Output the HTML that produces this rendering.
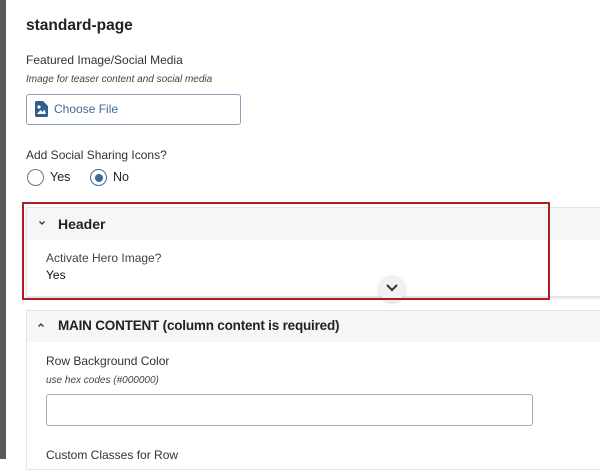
<!DOCTYPE html>
<html><head><style>
*{margin:0;padding:0;box-sizing:border-box}
body{width:600px;height:459px;overflow:hidden;background:#fff;font-family:"Liberation Sans",sans-serif;color:#222;position:relative}
.a{position:absolute;white-space:nowrap}
</style></head><body>
<div class="a" style="left:0;top:0;width:6px;height:459px;background:#5a5a5a"></div>
<div class="a" style="left:26px;top:17px;font-size:15.5px;font-weight:bold;color:#222">standard-page</div>
<div class="a" style="left:26px;top:53px;font-size:12px;color:#333">Featured Image/Social Media</div>
<div class="a" style="left:26px;top:74px;font-size:10px;font-style:italic;color:#444">Image for teaser content and social media</div>
<div class="a" style="left:26px;top:94px;width:215px;height:31px;border:1px solid #8aa0b8;border-radius:3px"></div>
<svg class="a" style="left:35px;top:101px" width="13" height="16" viewBox="0 0 13 16"><path d="M0 1.5Q0 0 1.5 0H8L13 5V14.5Q13 16 11.5 16H1.5Q0 16 0 14.5Z" fill="#2f5f8a"/><circle cx="4" cy="6" r="1.6" fill="#fff"/><path d="M2 13L5.5 9L7.5 11L9.5 8.5L11 13Z" fill="#fff"/></svg>
<div class="a" style="left:54px;top:102px;font-size:12px;color:#3d6b94">Choose File</div>
<div class="a" style="left:26px;top:148px;font-size:12px;color:#333">Add Social Sharing Icons?</div>
<div class="a" style="left:27px;top:169px;width:17px;height:17px;border:1.5px solid #777;border-radius:50%"></div>
<div class="a" style="left:50px;top:170px;font-size:12.5px;color:#222">Yes</div>
<div class="a" style="left:90px;top:169px;width:17px;height:17px;border:1.5px solid #3d6b94;border-radius:50%"></div>
<div class="a" style="left:94.5px;top:173.5px;width:8px;height:8px;background:#3d6b94;border-radius:50%"></div>
<div class="a" style="left:113px;top:170px;font-size:12.5px;color:#222">No</div>
<div class="a" style="left:26px;top:207px;width:580px;height:90px;border:1px solid #e2e4e8;background:#fff;box-shadow:0 1px 2px rgba(0,0,0,.15)"></div>
<div class="a" style="left:27px;top:208px;width:580px;height:32px;background:#f5f6f8"></div>
<svg class="a" style="left:38px;top:220px" width="8" height="6" viewBox="0 0 8 6"><path d="M1.5 1.5L4 4L6.5 1.5" stroke="#333" stroke-width="1.3" fill="none"/></svg>
<div class="a" style="left:58px;top:216px;font-size:14px;font-weight:bold;color:#222">Header</div>
<div class="a" style="left:46px;top:251px;font-size:12px;color:#444">Activate Hero Image?</div>
<div class="a" style="left:46px;top:268px;font-size:12px;color:#111">Yes</div>
<div class="a" style="left:379px;top:276px;width:26px;height:26px;border-radius:50%;background:#f0f1f3;box-shadow:0 1px 3px rgba(0,0,0,.2)"></div>
<svg class="a" style="left:385px;top:283px" width="14" height="10" viewBox="0 0 14 10"><path d="M2 2L7 7L12 2" stroke="#333" stroke-width="2" fill="none"/></svg>
<div class="a" style="left:22px;top:202px;width:528px;height:98px;border:2px solid #b01c24"></div>
<div class="a" style="left:26px;top:310px;width:580px;height:160px;border:1px solid #e2e4e8;background:#fff"></div>
<div class="a" style="left:27px;top:311px;width:580px;height:31px;background:#f5f6f8"></div>
<svg class="a" style="left:37px;top:322px" width="8" height="6" viewBox="0 0 8 6"><path d="M1.5 4.5L4 2L6.5 4.5" stroke="#333" stroke-width="1.3" fill="none"/></svg>
<div class="a" style="left:58px;top:318px;font-size:13.5px;font-weight:bold;color:#222;letter-spacing:-0.2px">MAIN CONTENT (column content is required)</div>
<div class="a" style="left:46px;top:354px;font-size:12px;color:#333">Row Background Color</div>
<div class="a" style="left:46px;top:375px;font-size:10px;font-style:italic;color:#444">use hex codes (#000000)</div>
<div class="a" style="left:46px;top:394px;width:487px;height:32px;border:1px solid #aaa;border-radius:3px"></div>
<div class="a" style="left:46px;top:448px;font-size:12px;color:#333">Custom Classes for Row</div>
</body></html>
